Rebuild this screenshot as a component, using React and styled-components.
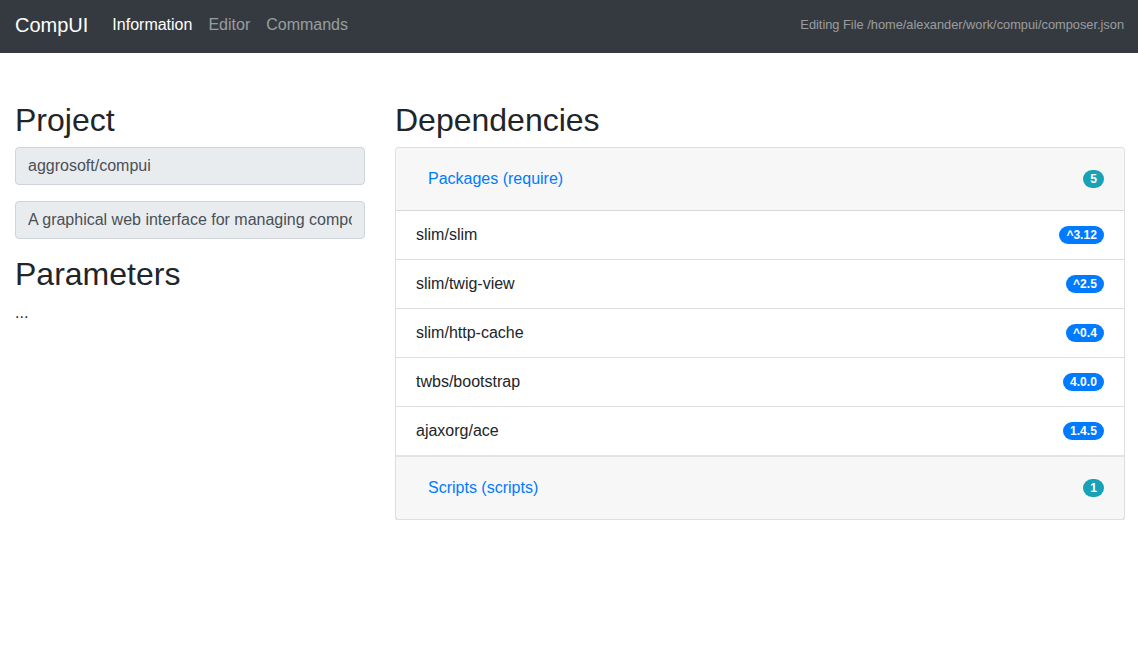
import React from "react";
import styled, { createGlobalStyle } from "styled-components";

const Global = createGlobalStyle`
  *, *::before, *::after { box-sizing: border-box; }
  html, body { margin: 0; padding: 0; }
  body {
    font-family: "Liberation Sans", Arial, sans-serif;
    font-size: 16px;
    line-height: 1.5;
    color: #212529;
    background: #fff;
  }
`;

const Navbar = styled.nav`
  display: flex;
  align-items: center;
  height: 53px;
  padding: 0 14px 4px 15px;
  background: #343a40;
`;

const Brand = styled.a`
  font-size: 20px;
  line-height: 30px;
  color: #fff;
  margin-right: 16px;
  text-decoration: none;
`;

const NavList = styled.div`
  display: flex;
  flex: 1;
`;

const NavLink = styled.a`
  padding: 8px;
  font-size: 16px;
  line-height: 24px;
  text-decoration: none;
  color: ${(p) => (p.$active ? "#fff" : "rgba(255,255,255,.5)")};
`;

const NavText = styled.span`
  font-size: 12.8px;
  line-height: 20px;
  color: rgba(255, 255, 255, 0.5);
`;

const Container = styled.div`
  display: grid;
  grid-template-columns: 350px 1fr;
  margin-top: 48px;
  padding: 0 13px 0 15px;
  column-gap: 30px;
`;

const Col = styled.div`
  min-width: 0;
`;

const H2 = styled.h2`
  font-size: 32px;
  font-weight: 500;
  line-height: 1.2;
  margin: 0 0 8px;
`;

const FormGroup = styled.div`
  margin-bottom: 16px;
`;

const Input = styled.input`
  display: block;
  width: 100%;
  height: 38px;
  padding: 6px 12px;
  font-family: inherit;
  font-size: 16px;
  line-height: 1.5;
  color: #495057;
  background: #e9ecef;
  border: 1px solid #ced4da;
  border-radius: 4px;
  outline: none;
`;

const Text = styled.div`
  margin: 0;
  line-height: 22px;
`;

const Card = styled.div`
  border: 1px solid rgba(0, 0, 0, 0.125);
  border-radius: ${(p) => (p.$first ? "4px 4px 0 0" : "0 0 4px 4px")};
  ${(p) => (p.$first ? "border-bottom: 0;" : "box-shadow: 0 1px 1px rgba(0,0,0,.12); border-top: 2px solid rgba(0,0,0,.11);")}
  overflow: hidden;
`;

const CardHeader = styled.div`
  display: flex;
  align-items: center;
  justify-content: space-between;
  padding: 12px 20px;
  background: rgba(0, 0, 0, 0.03);
  border-bottom: ${(p) => (p.$open ? "1px solid rgba(0,0,0,.125)" : "0")};
  height: ${(p) => (p.$open ? "63px" : "62px")};
`;

const LinkButton = styled.button`
  background: none;
  border: 0;
  padding: 6px 12px;
  font-family: inherit;
  font-size: 16px;
  line-height: 24px;
  color: #007bff;
  cursor: pointer;
`;

const Badge = styled.span`
  display: inline-block;
  padding: 3px 7.2px;
  font-size: 12px;
  font-weight: 700;
  line-height: 1;
  text-align: center;
  white-space: nowrap;
  color: #fff;
  border-radius: 10rem;
  background: ${(p) => (p.$info ? "#17a2b8" : "#007bff")};
`;

const ListItem = styled.div`
  display: flex;
  align-items: center;
  justify-content: space-between;
  padding: 12px 20px;
  line-height: 24px;
  border-bottom: 1px solid rgba(0, 0, 0, 0.125);
  &:last-child {
    border-bottom: 0;
  }
`;

const packages = [
  ["slim/slim", "^3.12"],
  ["slim/twig-view", "^2.5"],
  ["slim/http-cache", "^0.4"],
  ["twbs/bootstrap", "4.0.0"],
  ["ajaxorg/ace", "1.4.5"],
];

export default function App() {
  return (
    <>
      <Global />
      <Navbar>
        <Brand href="#">CompUI</Brand>
        <NavList>
          <NavLink $active href="#">Information</NavLink>
          <NavLink href="#">Editor</NavLink>
          <NavLink href="#">Commands</NavLink>
        </NavList>
        <NavText>Editing File /home/alexander/work/compui/composer.json</NavText>
      </Navbar>
      <Container>
        <Col>
          <H2>Project</H2>
          <FormGroup>
            <Input readOnly value="aggrosoft/compui" />
          </FormGroup>
          <FormGroup>
            <Input readOnly value="A graphical web interface for managing composer packages" />
          </FormGroup>
          <H2>Parameters</H2>
          <Text>...</Text>
        </Col>
        <Col>
          <H2>Dependencies</H2>
          <Card $first>
            <CardHeader $open>
              <LinkButton>Packages (require)</LinkButton>
              <Badge $info>5</Badge>
            </CardHeader>
            {packages.map(([name, ver]) => (
              <ListItem key={name}>
                <span>{name}</span>
                <Badge>{ver}</Badge>
              </ListItem>
            ))}
          </Card>
          <Card>
            <CardHeader>
              <LinkButton>Scripts (scripts)</LinkButton>
              <Badge $info>1</Badge>
            </CardHeader>
          </Card>
        </Col>
      </Container>
    </>
  );
}
